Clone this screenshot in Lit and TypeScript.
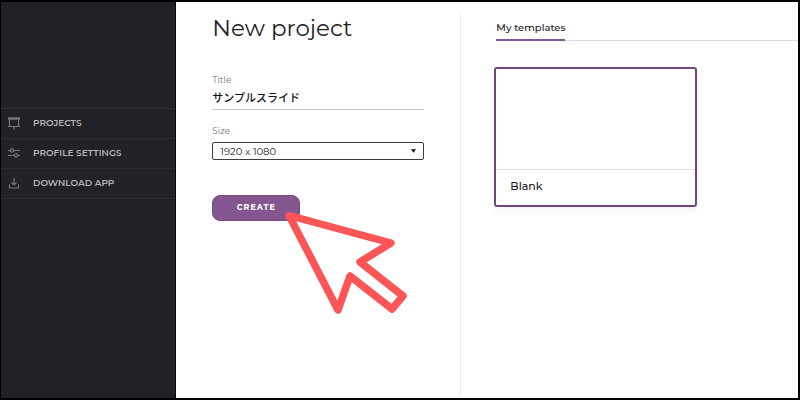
import { LitElement, html, css, svg } from "lit";
import { customElement, state } from "lit/decorators.js";

const icons = {
  board: svg`<path d="M1 2.5h12" stroke-width="2.4"/><path d="M2.5 3v7.5h9V3M1 10.5h12M7 10.5v3"/>`,
  sliders: svg`<path d="M1 4.5h2M7 4.5h6M1 9.5h6M11 9.5h2"/><circle cx="5" cy="4.5" r="1.6"/><circle cx="9" cy="9.5" r="1.6"/>`,
  download: svg`<path d="M7 2v7M4.5 6.5L7 9l2.5-2.5M2.5 8.5v3.5h9V8.5"/>`,
};

@customElement("app-root")
export class AppRoot extends LitElement {
  @state() private projectTitle = "サンプルスライド";

  static styles = css`
    :host {
      display: block;
      font-family: Montserrat, Inter, "Noto Sans CJK JP", sans-serif;
      color: #222126;
    }
    * { box-sizing: border-box; }
    .shell {
      display: grid;
      grid-template-columns: 22% minmax(0, 1fr);
      min-height: 100vh;
      border: 2px solid #000;
      border-left-width: 1px;
      background: #fff;
    }
    .side {
      background: #222126;
      border-right: 1px solid #09090b;
      padding-top: 106px;
    }
    .side ul {
      list-style: none;
      margin: 0;
      padding: 0;
      border-bottom: 1px solid #2e2d33;
    }
    .side a {
      display: flex;
      align-items: center;
      gap: 12px;
      height: 30px;
      padding: 0 0 2px 6px;
      border-top: 1px solid #2e2d33;
      color: #b5b4b8;
      font-size: 9px;
      font-weight: 600;
      text-decoration: none;
    }
    .icon {
      width: 14px;
      height: 14px;
      fill: none;
      stroke: #77767c;
      stroke-width: 1.2;
    }
    .main {
      display: grid;
      grid-template-columns: 285px minmax(0, 1fr);
    }
    .form {
      margin-top: 11px;
      padding: 0 36px;
      border-right: 1px solid #eeeeee;
    }
    h1 {
      margin: 0 0 32px;
      font-size: 23px;
      line-height: 30px;
      font-weight: 400;
      white-space: nowrap;
    }
    .label {
      display: block;
      font-size: 9px;
      line-height: 10px;
      color: #77767c;
    }
    .text {
      display: block;
      width: 100%;
      height: 25px;
      margin-bottom: 16px;
      padding: 0;
      border: 0;
      border-bottom: 1px solid #c8c8ca;
      background: none;
      font: 500 11px "Noto Sans CJK JP", sans-serif;
      color: #111;
      outline: 0;
    }
    .pick {
      position: relative;
      margin: 6px 0 35px;
    }
    .pick select {
      display: block;
      appearance: none;
      width: 100%;
      height: 18px;
      padding: 0 7px;
      border: 1px solid #3c3b40;
      border-radius: 2px;
      background: #fff;
      font: 400 10px Montserrat, Inter, sans-serif;
      color: #222126;
    }
    .caret {
      position: absolute;
      right: 8px;
      top: 7px;
      width: 5px;
      height: 4px;
      pointer-events: none;
    }
    .action {
      position: relative;
      width: 88px;
    }
    .create {
      display: block;
      width: 100%;
      height: 26px;
      padding: 0 0 2px;
      border: 1px solid #754b84;
      border-radius: 8px;
      background: #83568f;
      color: #fff;
      font: 700 8px Montserrat, Inter, sans-serif;
      letter-spacing: 1px;
    }
    .pointer {
      position: absolute;
      left: 68px;
      top: 10px;
      width: 130px;
      height: 120px;
      pointer-events: none;
    }
    .templates { padding: 17px 0 0 33px; }
    .tabs {
      display: flex;
      margin: 0 0 26px 2px;
      border-bottom: 1px solid #dcdbdf;
    }
    .tab {
      height: 22px;
      margin-bottom: -1px;
      padding: 0 0 4px;
      border: 0;
      border-bottom: 2px solid #83568f;
      background: none;
      color: #222126;
      font: 500 10px Montserrat, Inter, sans-serif;
    }
    .card {
      display: block;
      width: 203px;
      padding: 0;
      border: 2px solid #70487f;
      border-radius: 3px;
      background: #fff;
      box-shadow: 0 2px 6px rgba(0, 0, 0, 0.06);
      color: #222126;
      font: 500 11px Montserrat, Inter, sans-serif;
      text-align: left;
    }
    .preview { display: block; height: 100px; }
    .name {
      display: block;
      padding: 0 0 2px 14px;
      border-top: 1px solid #e2e1e5;
      line-height: 33px;
    }
  `;

  private item(icon: keyof typeof icons, text: string) {
    return html`<li>
      <a href="#"><svg class="icon" viewBox="0 0 14 14" aria-hidden="true">${icons[icon]}</svg>${text}</a>
    </li>`;
  }

  render() {
    return html`
      <div class="shell">
        <nav class="side">
          <ul>
            ${this.item("board", "PROJECTS")}
            ${this.item("sliders", "PROFILE SETTINGS")}
            ${this.item("download", "DOWNLOAD APP")}
          </ul>
        </nav>
        <main class="main">
          <section class="form">
            <h1>New project</h1>
            <label class="label" for="title">Title</label>
            <input class="text" id="title" type="text" .value=${this.projectTitle} />
            <label class="label" for="size">Size</label>
            <div class="pick">
              <select id="size"><option>1920 x 1080</option></select>
              <svg class="caret" viewBox="0 0 6 4" aria-hidden="true"><path d="M0 0h6L3 4z" /></svg>
            </div>
            <div class="action">
              <button class="create" type="button">CREATE</button>
              <svg class="pointer" viewBox="0 0 130 120" aria-hidden="true">
                <path d="M9 10.5 L111 38 L80 57 L123 91 L112 104 L70 71 L58 105 Z"
                  fill="#fff" stroke="#fb5557" stroke-width="7.5" stroke-linejoin="round" />
              </svg>
            </div>
          </section>
          <section class="templates">
            <div class="tabs"><button class="tab" type="button">My templates</button></div>
            <button class="card" type="button">
              <span class="preview"></span>
              <span class="name">Blank</span>
            </button>
          </section>
        </main>
      </div>
    `;
  }
}
